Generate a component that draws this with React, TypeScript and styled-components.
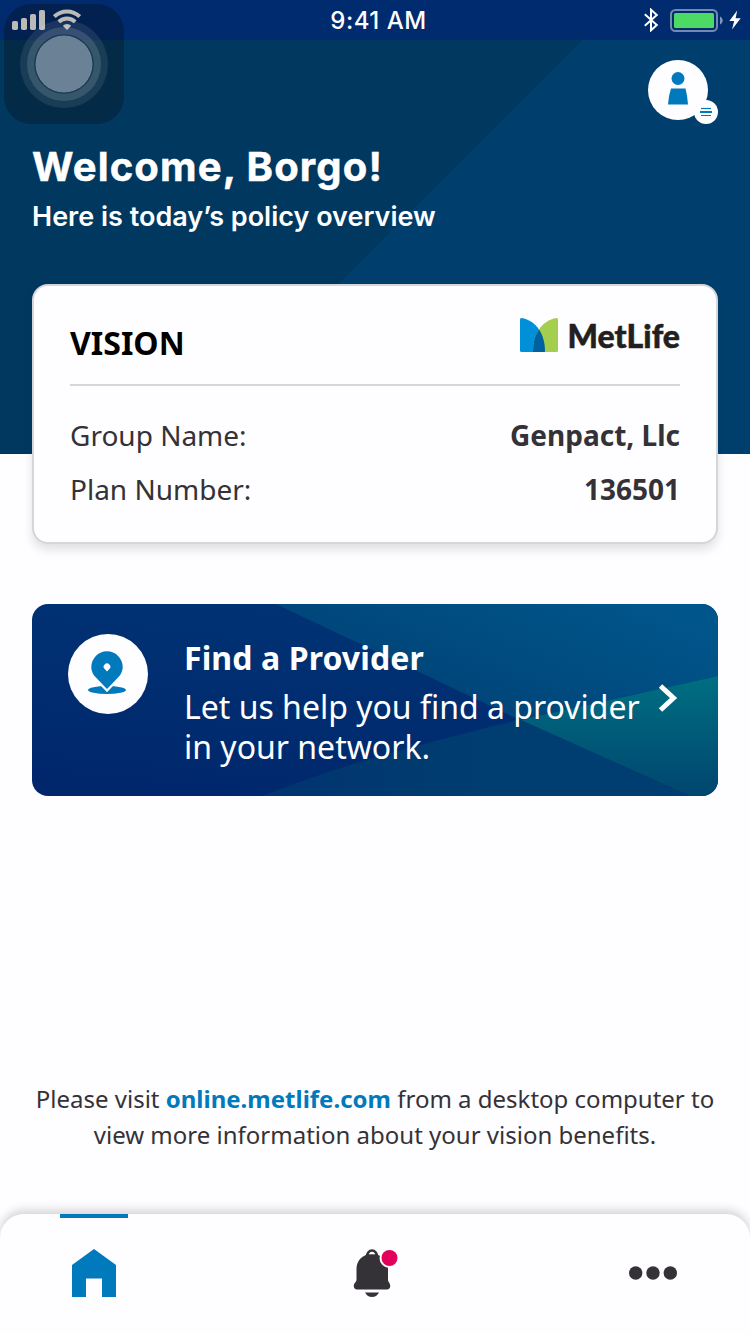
import React from "react";
import styled, { createGlobalStyle } from "styled-components";

const color = {
  page: "#fefdff",
  ink: "#343236",
  blue: "#007abc",
  navy: "#002b6e",
  deep: "#003860",
  wave: "#003f6d",
  line: "#d6d6d8",
  pink: "#e1005c",
};

const GlobalStyle = createGlobalStyle`
  * { box-sizing: border-box; }
  body {
    margin: 0;
    background: ${color.page};
    color: ${color.ink};
    font-family: "Noto Sans", "Open Sans", sans-serif;
  }
  h1, h2, p, dl, dt, dd { margin: 0; }
  svg { display: block; }
`;

const Screen = styled.div`
  position: relative;
  width: 750px;
  height: 1334px;
  display: flex;
  flex-direction: column;
  overflow: hidden;
  background: ${color.page};
`;

const StatusBar = styled.div`
  height: 40px;
  flex: none;
  display: grid;
  grid-template-columns: 1fr auto 1fr;
  align-items: center;
  padding: 0 9px 0 12px;
  background: ${color.navy};
  color: #fff;
`;

const StatusGroup = styled.div<{ $end?: boolean }>`
  display: flex;
  align-items: center;
  gap: ${(p) => (p.$end ? "6px" : "7px")};
  justify-content: ${(p) => (p.$end ? "flex-end" : "flex-start")};
`;

const Clock = styled.span`
  font: 500 24px/38px Inter, sans-serif;
  letter-spacing: 0.5px;
  white-space: nowrap;
  padding: 2px 0 0 4px;
`;

const AssistiveTouch = styled.div`
  position: absolute;
  left: 4px;
  top: 4px;
  width: 120px;
  height: 120px;
  border-radius: 27px;
  background: rgba(12, 8, 2, 0.28);
`;

const Hero = styled.header`
  height: 414px;
  flex: none;
  padding: 20px 32px 0;
  background: linear-gradient(135deg, ${color.deep} 50%, ${color.wave} 50.08%);
  color: #fff;
`;

const HeroTop = styled.div`
  display: flex;
  justify-content: flex-end;
  height: 80px;
`;

const Profile = styled.div`
  position: relative;
  width: 70px;
  height: 64px;
`;

const Title = styled.h1`
  font: 700 40px/54px Inter, sans-serif;
  letter-spacing: 1.15px;
  -webkit-text-stroke: 0.5px #fff;
  white-space: nowrap;
`;

const Subtitle = styled.p`
  margin-top: 3px;
  font: 600 27px/40px Inter, sans-serif;
  letter-spacing: 0;
  white-space: nowrap;
`;

const Content = styled.main`
  flex: 1;
  display: flex;
  flex-direction: column;
  margin-top: -170px;
  padding: 0 32px;
`;

const PolicyCard = styled.section`
  height: 260px;
  padding: 30px 36px 0;
  border: 2px solid ${color.line};
  border-radius: 16px;
  background: ${color.page};
  box-shadow: 0 6px 10px rgba(40, 30, 50, 0.13);
`;

const PolicyHead = styled.div`
  display: flex;
  justify-content: space-between;
  height: 70px;
  border-bottom: 2px solid ${color.line};
`;

const PolicyName = styled.h2`
  color: #000;
  font-size: 32px;
  line-height: 53px;
  font-weight: 700;
`;

const Brand = styled.div`
  display: flex;
  gap: 10px;
  padding-top: 2px;
  color: #231f20;
  font: 900 32px/36px Lato, sans-serif;
`;

const BrandName = styled.span`
  -webkit-text-stroke: 0.5px #231f20;
`;

const Details = styled.dl`
  display: grid;
  grid-template-columns: auto auto;
  justify-content: space-between;
  margin-top: 22px;
  font-size: 28px;
  line-height: 54px;
`;

const Value = styled.dd`
  text-align: right;
  font-weight: 700;
`;

const ProviderCard = styled.section`
  position: relative;
  display: flex;
  flex: none;
  height: 192px;
  margin-top: 60px;
  padding: 30px 36px 0;
  border-radius: 16px;
  overflow: hidden;
  color: #fff;
  isolation: isolate;
`;

const Backdrop = styled.svg`
  position: absolute;
  inset: 0;
  z-index: -1;
`;

const PinBadge = styled.div`
  flex: none;
  width: 80px;
  height: 80px;
  border-radius: 50%;
  background: ${color.page};
`;

const ProviderText = styled.div`
  width: 470px;
  margin-left: 36px;
  white-space: nowrap;
`;

const ProviderTitle = styled.h2`
  font-size: 32px;
  line-height: 48px;
  letter-spacing: 0.1px;
  font-weight: 700;
`;

const ProviderBody = styled.p`
  margin-top: 5px;
  font-size: 32px;
  line-height: 40px;
`;

const Chevron = styled.svg`
  margin-top: 49px;
  margin-left: 4px;
  flex: none;
`;

const Notice = styled.p`
  margin: auto -10px 61px;
  text-align: center;
  font-size: 24px;
  line-height: 36px;
  white-space: nowrap;
`;

const Link = styled.a`
  color: ${color.blue};
  font-weight: 700;
`;

const TabBar = styled.nav`
  flex: none;
  height: 120px;
  display: flex;
  justify-content: space-between;
  padding: 0 63px 0 60px;
  border-radius: 24px 24px 0 0;
  background: ${color.page};
  box-shadow: 0 -4px 10px rgba(50, 45, 50, 0.2);
`;

const Tab = styled.div<{ $active?: boolean }>`
  width: 68px;
  padding-top: 31px;
  display: flex;
  justify-content: center;
  border-top: 4px solid ${(p) => (p.$active ? color.blue : "transparent")};
`;

const BellTab = styled(Tab)`
  padding-left: 5px;
`;

const SignalIcon = () => (
  <svg width="34" height="22" viewBox="0 0 34 22" fill="#fff">
    <rect x="0" y="12" width="6" height="9" rx="1.8" />
    <rect x="9" y="9" width="6" height="12" rx="1.8" />
    <rect x="18" y="5" width="6" height="16" rx="1.8" />
    <rect x="27" y="1" width="6" height="20" rx="1.8" />
  </svg>
);

const WifiIcon = () => (
  <svg width="28" height="22" viewBox="0 0 28 22" fill="none" stroke="#fff">
    <path d="M1.300 7.600a18.400 18.400 0 0 1 25.400 0" strokeWidth="4" />
    <path d="M5.800 12.900a11.600 11.600 0 0 1 16.400 0" strokeWidth="4" />
    <path d="M14 21l-4.200-4.300a6 6 0 0 1 8.400 0z" fill="#fff" stroke="none" />
  </svg>
);

const BluetoothIcon = () => (
  <svg width="20" height="24" viewBox="0 0 20 24" fill="none" stroke="#fff" strokeWidth="2">
    <path d="M.8 6.300L12.800 17 7 22.300V1.700L12.800 7 .8 17.700" />
  </svg>
);

const BatteryIcon = () => (
  <svg width="53" height="24" viewBox="0 0 53 24">
    <rect x="1" y="2" width="46" height="21" rx="4.500" fill="none" stroke="#fff" strokeOpacity=".45" strokeWidth="2" />
    <rect x="4" y="5" width="40" height="15" rx="1.500" fill="#4cd964" />
    <path d="M50 8.500c3.600 1.500 3.600 6.500 0 8z" fill="#fff" fillOpacity=".5" />
  </svg>
);

const BoltIcon = () => (
  <svg width="12" height="20" viewBox="0 0 12 20" fill="#fff">
    <path d="M8.200 .5L.3 11h4.900L3 19.500 11.700 8.300H6.600z" />
  </svg>
);

const TouchRings = () => (
  <svg width="120" height="120" viewBox="0 0 120 120" fill="#fff">
    <circle cx="60" cy="60" r="44" fillOpacity=".09" />
    <circle cx="60" cy="60" r="37" fillOpacity=".13" />
    <circle cx="60" cy="60" r="29.800" fill="#17384f" />
    <circle cx="60" cy="60" r="28.500" fill="#6b8195" />
  </svg>
);

const ProfileIcon = () => (
  <svg width="72" height="66" viewBox="0 0 72 66">
    <circle cx="30" cy="30" r="30" fill={color.page} />
    <circle cx="58" cy="52" r="12" fill={color.page} />
    <circle cx="30" cy="18.500" r="6.500" fill={color.blue} />
    <path d="M23 28.500h14.500q2 7.500 2.500 16H20q.5-8.500 3-16z" fill={color.blue} />
    <path d="M53 48.500h10" stroke={color.blue} strokeWidth="1.200" />
    <path d="M52 52h12" stroke={color.blue} strokeWidth="2" />
    <path d="M53 55.500h10" stroke="#34648a" strokeWidth="1" />
  </svg>
);

const BrandMark = () => (
  <svg width="38" height="34" viewBox="0 0 38 34">
    <path d="M1.500 0C9 1 15.500 6 19 11.500c3.500 5.500 6 12 6 22.500H1.500Q0 34 0 32.500v-31Q0 0 1.500 0z" fill="#0090da" />
    <path d="M36.500 0Q38 0 38 1.500v31q0 1.500-1.500 1.500H13c0-10 2-16.500 6-22.500C23 5.500 29 1 36.500 0z" fill="#a4ce4e" />
    <path d="M19 11.500c3.500 5.500 6 12 6 22.500H13c0-10 2-16.500 6-22.500z" fill="#0061a0" />
  </svg>
);

const PinIcon = () => (
  <svg width="80" height="80" viewBox="0 0 80 80">
    <ellipse cx="39" cy="56" rx="19" ry="4" fill={color.blue} />
    <path
      d="M39 55L27.500 43C23.500 39 23.300 34 23.300 33a15.700 15.700 0 0 1 31.400 0c0 1-.2 6-4.200 10z"
      fill={color.blue}
      stroke={color.page}
      strokeWidth="4.500"
      paintOrder="stroke"
    />
    <path d="M39 37.500l-2.300-2.400a3.300 3.300 0 1 1 4.600 0z" fill={color.page} />
  </svg>
);

const ProviderBackdrop = () => (
  <Backdrop width="686" height="192" viewBox="0 0 686 192">
    <defs>
      <linearGradient id="left" x1="0" y1="1" x2=".35" y2="0">
        <stop offset="0" stopColor="#00266c" />
        <stop offset="1" stopColor="#003374" />
      </linearGradient>
      <linearGradient id="top" gradientUnits="userSpaceOnUse" x1="430" y1="130" x2="500" y2="-40">
        <stop offset="0" stopColor="#004276" />
        <stop offset="1" stopColor="#00558a" />
      </linearGradient>
      <linearGradient id="right" x1="0" y1="0" x2="0" y2="1">
        <stop offset="0" stopColor="#006f82" />
        <stop offset="1" stopColor="#00466f" />
      </linearGradient>
      <linearGradient id="bottom" x1="0" y1="0" x2="1" y2="0">
        <stop offset="0" stopColor="#00346f" />
        <stop offset=".5" stopColor="#003d70" />
      </linearGradient>
    </defs>
    <rect width="686" height="192" fill="url(#left)" />
    <path d="M244 0H686V72L488 116z" fill="url(#top)" />
    <path d="M686 72L488 116 658 192H686z" fill="url(#right)" />
    <path d="M488 115.500L658 192H230Q310 161 381 143 440 127 488 115.500z" fill="url(#bottom)" />
  </Backdrop>
);

const HomeIcon = () => (
  <svg width="44" height="48" viewBox="0 0 44 48" fill={color.blue}>
    <path d="M22 0L44 16v32H30V29.500H14V48H0V16z" />
  </svg>
);

const BellIcon = () => (
  <svg width="46" height="50" viewBox="0 0 46 50">
    <path d="M14 7.500a5 6 0 0 1 10 0" fill="none" stroke={color.ink} strokeWidth="2.600" />
    <path
      d="M19 5C9 5 3.500 12 3.500 20v11c0 2-2.500 3-2.700 5.500C.5 39 2 40.500 4 40.500h30c2 0 3.500-1.500 3.200-4C37 34 35 33 35 31V20C35 12 29 5 19 5z"
      fill={color.ink}
    />
    <path d="M16.200 5.300q2.800-2.800 5.600 0z" fill={color.page} />
    <path d="M12 43.500h14q-2.500 4.500-7 4.500t-7-4.500z" fill={color.ink} />
    <circle cx="36.500" cy="9" r="10" fill={color.page} />
    <circle cx="36.500" cy="9" r="8" fill={color.pink} />
  </svg>
);

const MoreIcon = () => (
  <svg width="48" height="48" viewBox="0 0 48 48" fill={color.ink}>
    <circle cx="6.700" cy="24" r="6.700" />
    <circle cx="24" cy="24" r="6.700" />
    <circle cx="41.300" cy="24" r="6.700" />
  </svg>
);

export default function App() {
  return (
    <Screen>
      <GlobalStyle />
      <StatusBar>
        <StatusGroup>
          <SignalIcon />
          <WifiIcon />
        </StatusGroup>
        <Clock>9:41 AM</Clock>
        <StatusGroup $end>
          <BluetoothIcon />
          <BatteryIcon />
          <BoltIcon />
        </StatusGroup>
      </StatusBar>
      <AssistiveTouch>
        <TouchRings />
      </AssistiveTouch>
      <Hero>
        <HeroTop>
          <Profile>
            <ProfileIcon />
          </Profile>
        </HeroTop>
        <Title>Welcome, Borgo!</Title>
        <Subtitle>Here is today’s policy overview</Subtitle>
      </Hero>
      <Content>
        <PolicyCard>
          <PolicyHead>
            <PolicyName>VISION</PolicyName>
            <Brand>
              <BrandMark />
              <BrandName>MetLife</BrandName>
            </Brand>
          </PolicyHead>
          <Details>
            <dt>Group Name:</dt>
            <Value>Genpact, Llc</Value>
            <dt>Plan Number:</dt>
            <Value>136501</Value>
          </Details>
        </PolicyCard>
        <ProviderCard>
          <ProviderBackdrop />
          <PinBadge>
            <PinIcon />
          </PinBadge>
          <ProviderText>
            <ProviderTitle>Find a Provider</ProviderTitle>
            <ProviderBody>
              Let us help you find a provider
              <br />
              in your network.
            </ProviderBody>
          </ProviderText>
          <Chevron width="22" height="30" viewBox="0 0 22 30" fill="none" stroke="#fff" strokeWidth="5">
            <path d="M2.500 3L15.500 15 2.500 27" />
          </Chevron>
        </ProviderCard>
        <Notice>
          Please visit <Link>online.metlife.com</Link> from a desktop computer to
          <br />
          view more information about your vision benefits.
        </Notice>
      </Content>
      <TabBar>
        <Tab $active>
          <HomeIcon />
        </Tab>
        <BellTab>
          <BellIcon />
        </BellTab>
        <Tab>
          <MoreIcon />
        </Tab>
      </TabBar>
    </Screen>
  );
}
